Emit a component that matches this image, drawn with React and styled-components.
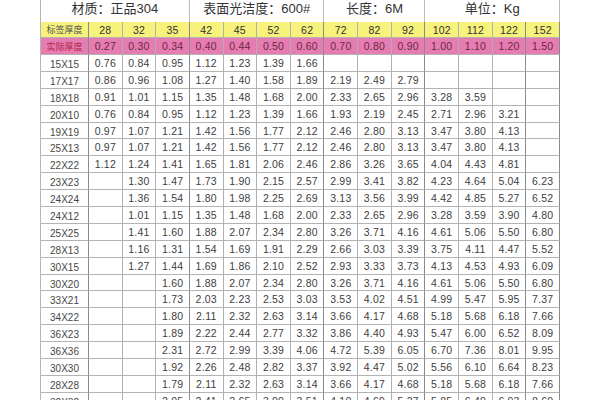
import React from "react"
import styled, { createGlobalStyle } from "styled-components"

const GlobalStyle = createGlobalStyle`
  html, body {
    margin: 0;
    padding: 0;
    background: #ffffff;
  }
`

const Page = styled.div`
  width: 600px;
  height: 400px;
  overflow: hidden;
  padding-left: 40px;
  box-sizing: border-box;
  background: #fff;
`

const Grid = styled.div`
  display: grid;
  width: 520px;
  grid-template-columns: 48px repeat(14, 1fr);
  grid-template-rows: 22px 16px 17px;
  grid-auto-rows: 16.9px;
  border-left: 1px solid #b5b5b5;
  box-sizing: border-box;
  font-family: "Liberation Sans", Arial, sans-serif;
`

const Title = styled.div`
  grid-column: span ${({ span }) => span};
  display: flex;
  align-items: flex-start;
  justify-content: center;
  padding-top: 1px;
  font-family: "Liberation Sans", "Noto Sans CJK SC", sans-serif;
  font-size: 13px;
  line-height: 15px;
  color: #333;
  border-right: 1px solid #bdbdbd;
  box-sizing: border-box;
`

const Cell = styled.div`
  display: flex;
  align-items: center;
  justify-content: center;
  box-sizing: border-box;
  font-size: 10.5px;
  letter-spacing: 0.2px;
  border-right: 1px solid ${({ strong }) => (strong ? "#8a8a8a" : "#b0b0b0")};
  border-bottom: 1px solid #b3b3b3;
  white-space: nowrap;
  overflow: hidden;
  background: ${({ kind }) =>
    kind === "yellow" ? "#f6f27c" : kind === "pink" ? "#e57cb2" : "#fff"};
  color: ${({ kind }) =>
    kind === "yellow" ? "#333" : kind === "pink" ? "#6c2840" : "#404040"};
`

const Label = styled(Cell)`
  font-family: "Liberation Sans", "Noto Sans CJK SC", sans-serif;
  font-size: ${({ kind }) => (kind ? "9px" : "10px")};
  letter-spacing: 0;
  color: ${({ kind }) =>
    kind === "yellow" ? "#555" : kind === "pink" ? "#b3284c" : "#474747"};
  padding-top: ${({ kind }) => (kind ? "0" : "3px")};
`

const sizes = ["28", "32", "35", "42", "45", "52", "62", "72", "82", "92", "102", "112", "122", "152"]
const actual = ["0.27", "0.30", "0.34", "0.40", "0.44", "0.50", "0.60", "0.70", "0.80", "0.90", "1.00", "1.10", "1.20", "1.50"]

// columns that close a group get a darker line after them
const strongAfter = [2, 6, 9, 12, 13]

const row = (label, start, values) => {
  const list = values.split(" ")
  const cells = sizes.map((_, i) =>
    i >= start && i - start < list.length ? list[i - start] : ""
  )
  return { label, cells }
}

const rows = [
  row("15X15", 0, "0.76 0.84 0.95 1.12 1.23 1.39 1.66"),
  row("17X17", 0, "0.86 0.96 1.08 1.27 1.40 1.58 1.89 2.19 2.49 2.79"),
  row("18X18", 0, "0.91 1.01 1.15 1.35 1.48 1.68 2.00 2.33 2.65 2.96 3.28 3.59"),
  row("20X10", 0, "0.76 0.84 0.95 1.12 1.23 1.39 1.66 1.93 2.19 2.45 2.71 2.96 3.21"),
  row("19X19", 0, "0.97 1.07 1.21 1.42 1.56 1.77 2.12 2.46 2.80 3.13 3.47 3.80 4.13"),
  row("25X13", 0, "0.97 1.07 1.21 1.42 1.56 1.77 2.12 2.46 2.80 3.13 3.47 3.80 4.13"),
  row("22X22", 0, "1.12 1.24 1.41 1.65 1.81 2.06 2.46 2.86 3.26 3.65 4.04 4.43 4.81"),
  row("23X23", 1, "1.30 1.47 1.73 1.90 2.15 2.57 2.99 3.41 3.82 4.23 4.64 5.04 6.23"),
  row("24X24", 1, "1.36 1.54 1.80 1.98 2.25 2.69 3.13 3.56 3.99 4.42 4.85 5.27 6.52"),
  row("24X12", 1, "1.01 1.15 1.35 1.48 1.68 2.00 2.33 2.65 2.96 3.28 3.59 3.90 4.80"),
  row("25X25", 1, "1.41 1.60 1.88 2.07 2.34 2.80 3.26 3.71 4.16 4.61 5.06 5.50 6.80"),
  row("28X13", 1, "1.16 1.31 1.54 1.69 1.91 2.29 2.66 3.03 3.39 3.75 4.11 4.47 5.52"),
  row("30X15", 1, "1.27 1.44 1.69 1.86 2.10 2.52 2.93 3.33 3.73 4.13 4.53 4.93 6.09"),
  row("30X20", 2, "1.60 1.88 2.07 2.34 2.80 3.26 3.71 4.16 4.61 5.06 5.50 6.80"),
  row("33X21", 2, "1.73 2.03 2.23 2.53 3.03 3.53 4.02 4.51 4.99 5.47 5.95 7.37"),
  row("34X22", 2, "1.80 2.11 2.32 2.63 3.14 3.66 4.17 4.68 5.18 5.68 6.18 7.66"),
  row("36X23", 2, "1.89 2.22 2.44 2.77 3.32 3.86 4.40 4.93 5.47 6.00 6.52 8.09"),
  row("36X36", 2, "2.31 2.72 2.99 3.39 4.06 4.72 5.39 6.05 6.70 7.36 8.01 9.95"),
  row("30X30", 2, "1.92 2.26 2.48 2.82 3.37 3.92 4.47 5.02 5.56 6.10 6.64 8.23"),
  row("28X28", 2, "1.79 2.11 2.32 2.63 3.14 3.66 4.17 4.68 5.18 5.68 6.18 7.66"),
  row("32X32", 2, "2.05 2.41 2.65 3.00 3.51 4.10 4.69 5.27 5.85 6.40 6.93 8.60"),
]

const App = () => {
  return (
    <Page>
      <GlobalStyle />
      <Grid>
        <Title span={4}>材质：正品304</Title>
        <Title span={4}>表面光洁度：600#</Title>
        <Title span={3}>长度：6M</Title>
        <Title span={4}>单位：Kg</Title>

        <Label kind="yellow" strong>标签厚度</Label>
        {sizes.map((s, i) => (
          <Cell kind="yellow" key={"s" + s} strong={strongAfter.includes(i)}>
            {s}
          </Cell>
        ))}

        <Label kind="pink" strong>实际厚度</Label>
        {actual.map((a, i) => (
          <Cell kind="pink" key={"a" + i} strong={strongAfter.includes(i)}>
            {a}
          </Cell>
        ))}

        {rows.map((r) => (
          <React.Fragment key={r.label}>
            <Label strong>{r.label}</Label>
            {r.cells.map((v, i) => (
              <Cell key={r.label + i} strong={strongAfter.includes(i)}>
                {v}
              </Cell>
            ))}
          </React.Fragment>
        ))}
      </Grid>
    </Page>
  )
}

export default App
